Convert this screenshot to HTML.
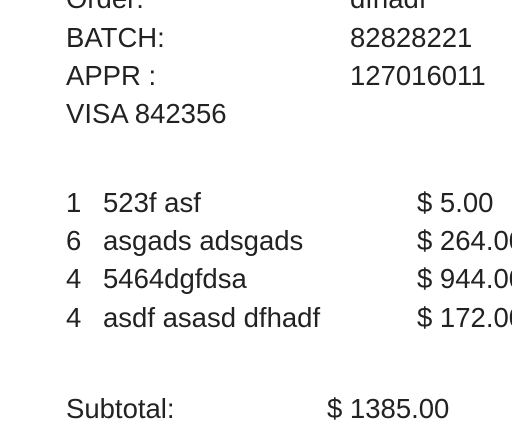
<!DOCTYPE html>
<html><head><style>
html,body{margin:0;padding:0;width:512px;height:400px;overflow:hidden;background:#fff;}
div{position:absolute;font-family:"Liberation Sans",Arial,sans-serif;font-size:27.5px;line-height:38px;color:#222;white-space:nowrap;}
</style></head><body>
<div style="left:66px;top:-20px">Order:</div><div style="left:350px;top:-20px">dfhadf</div>
<div style="left:66px;top:19px">BATCH:</div><div style="left:350px;top:19px">82828221</div>
<div style="left:66px;top:57px">APPR :</div><div style="left:350px;top:57px">127016011</div>
<div style="left:66px;top:95px">VISA 842356</div>
<div style="left:66px;top:184px">1</div><div style="left:103px;top:184px">523f asf</div><div style="left:417px;top:184px">$ 5.00</div>
<div style="left:66px;top:222px">6</div><div style="left:103px;top:222px">asgads adsgads</div><div style="left:417px;top:222px">$ 264.00</div>
<div style="left:66px;top:260px">4</div><div style="left:103px;top:260px">5464dgfdsa</div><div style="left:417px;top:260px">$ 944.00</div>
<div style="left:66px;top:299px">4</div><div style="left:103px;top:299px">asdf asasd dfhadf</div><div style="left:417px;top:299px">$ 172.00</div>
<div style="left:66px;top:390px">Subtotal:</div><div style="left:327px;top:390px">$ 1385.00</div>
</body></html>
